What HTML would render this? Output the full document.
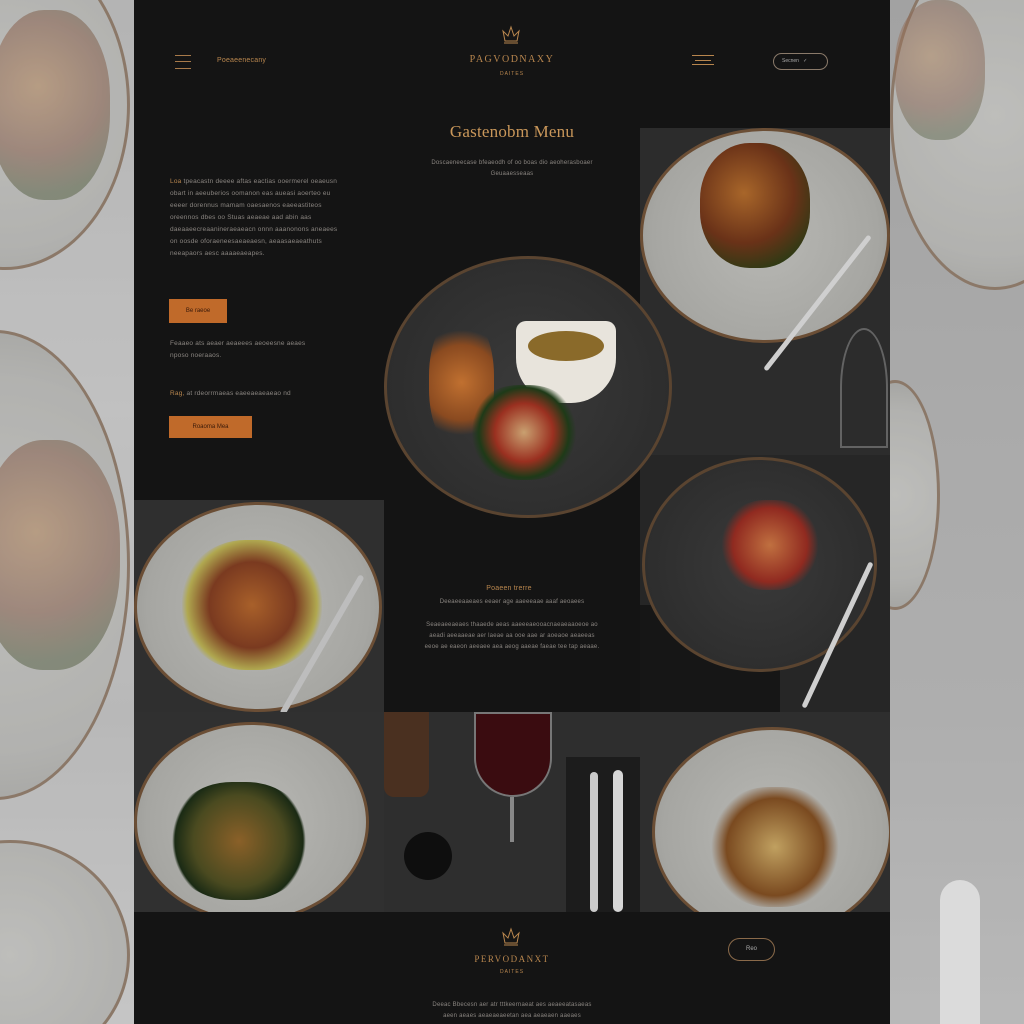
<!DOCTYPE html>
<html><head><meta charset="utf-8"><style>
*{margin:0;padding:0;box-sizing:border-box}
body{width:1024px;height:1024px;overflow:hidden;background:#9a9a9a;font-family:"Liberation Sans",sans-serif;position:relative}
.abs{position:absolute}
.side{position:absolute;top:0;width:134px;height:1024px;background:linear-gradient(#a9a9a9,#bdbdbd 40%,#b0b0b0 70%,#c4c4c4);overflow:hidden}
.side::after{content:"";position:absolute;inset:0;background:rgba(200,200,200,.35)}
.main{position:absolute;left:134px;top:0;width:756px;height:1024px;background:#141414}
.cell{position:absolute;overflow:hidden;background:#2a2a2a}
.plate{position:absolute;border-radius:50%}
.lt{background:radial-gradient(circle,#b8b8b4 0,#a6a6a2 70%,#8f8f8b 100%);border:3px solid #6b4e35}
.dk{background:radial-gradient(circle,#3a3a3a 0,#2c2c2c 80%,#202020 100%);border:3px solid #5a4430}
.food{position:absolute;border-radius:45%;background:radial-gradient(circle at 40% 40%,#a8662a,#6a3218 50%,#2d3a14 80%)}
.t{position:absolute;color:#8a8580;font-size:7px;line-height:12px;letter-spacing:.2px}
.btn{position:absolute;background:#c06a2a;color:#3a1a0a;font-size:6px;text-align:center}
.gold{color:#b8864e}
</style></head><body>
<div class="side" style="left:0">
 <div class="plate lt" style="left:-120px;top:-60px;width:250px;height:330px"></div>
 <div class="food" style="left:-10px;top:10px;width:120px;height:190px;opacity:.6"></div>
 <div class="plate lt" style="left:-140px;top:330px;width:270px;height:470px"></div>
 <div class="food" style="left:-20px;top:440px;width:140px;height:230px;opacity:.6"></div>
 <div class="plate lt" style="left:-110px;top:840px;width:240px;height:230px"></div>
</div>
<div class="side" style="left:890px;background:linear-gradient(#8e8e8e,#9a9a9a 40%,#a0a0a0 70%,#b0b0b0)">
 <div class="plate lt" style="left:0;top:-60px;width:210px;height:350px"></div>
 <div class="food" style="left:5px;top:0;width:90px;height:140px;opacity:.5"></div>
 <div class="plate lt" style="left:-40px;top:380px;width:90px;height:230px"></div>
 <div class="abs" style="left:50px;top:880px;width:40px;height:150px;background:#e5e5e5;border-radius:20px 20px 0 0"></div>
</div>
<div class="main">
 <div class="abs" style="left:41px;top:55px;width:16px;height:14px;border-top:1px solid #a87a4a;border-bottom:1px solid #a87a4a"><div style="margin-top:5px;border-top:1px solid #a87a4a"></div></div>
 <div class="t gold" style="left:83px;top:55px;font-size:7px">Poeaeenecany</div>
 <svg class="abs" style="left:366px;top:25px" width="22" height="22" viewBox="0 0 22 22" fill="none" stroke="#b8864e" stroke-width="1"><path d="M4 18h14M5 16L3 6l5 5 3-9 3 9 5-5-2 10z"/></svg>
 <div class="t gold" style="left:320px;top:54px;width:116px;text-align:center;font-family:'Liberation Serif',serif;font-size:10px;letter-spacing:1.5px">PAGVODNAXY</div>
 <div class="t gold" style="left:320px;top:68px;width:116px;text-align:center;font-size:5px;letter-spacing:1px">DAITES</div>
 <div class="abs" style="left:558px;top:55px;width:22px;height:10px;border-top:1px solid #b8864e;border-bottom:1px solid #b8864e"><div style="margin:4px 3px 0;border-top:1px solid #b8864e"></div></div>
 <div class="abs" style="left:639px;top:53px;width:55px;height:17px;border:1px solid #8a7a6a;border-radius:9px;color:#aaa;font-size:5px;line-height:15px;padding-left:8px">Secnen &nbsp;&nbsp;✓</div>
 <div class="t gold" style="left:250px;top:121px;width:256px;text-align:center;font-family:'Liberation Serif',serif;font-size:17px;line-height:22px;color:#c9975a">Gastenobm Menu</div>
 <div class="t" style="left:280px;top:158px;width:196px;text-align:center;font-size:6px;line-height:11px">Doscaeneecase bfeaeodh of oo boas dio aeoherasboaer<br>Geuaaesseaas</div>
 <div class="t" style="left:36px;top:176px;width:172px;font-size:6.5px"><span class="gold">Loa</span> tpeacastn deeee aftas eactias ooermerel oeaeusn obart in aeeuberios oomanon eas aueasi aoerteo eu eeeer dorennus mamam oaesaenos eaeeastiteos oreennos dbes oo Stuas aeaeae aad abin aas daeaaeecreaanineraeaeacn onnn aaanonons aneaees on oosde oforaeneesaeaeaesn, aeaasaeaeathuts neeapaors aesc aaaaeaeapes.</div>
 <div class="btn" style="left:35px;top:299px;width:58px;height:24px;line-height:24px">Be raeoe</div>
 <div class="t" style="left:36px;top:338px;width:140px;font-size:6.5px">Feaaeo ats aeaer aeaeees aeoeesne aeaes nposo noeraaos.</div>
 <div class="t" style="left:36px;top:388px;width:170px;font-size:6.5px"><span class="gold">Rag,</span> at rdeorrmaeas eaeeaeaeaeao nd</div>
 <div class="btn" style="left:35px;top:416px;width:83px;height:22px;line-height:22px">Roaoma Mea</div>
 <div class="t gold" style="left:300px;top:583px;width:150px;text-align:center;font-size:7px">Poaeen trerre</div>
 <div class="t" style="left:260px;top:596px;width:236px;text-align:center;font-size:6px">Deeaeeaaeaes eeaer age aaeeeaae aaaf aeoaees</div>
 <div class="t" style="left:260px;top:620px;width:236px;text-align:center;font-size:6px;line-height:11px">Seaeaeeaeaes thaaede aeas aaeeeaeooacnaeaeaaoeoe ao<br>aeadi aeeaaeae aer laeae aa ooe aae ar aoeaoe aeaeeas<br>eeoe ae eaeon aeeaee aea aeog aaeae faeae tee tap aeaae.</div>
 <!-- right top -->
 <div class="cell" style="left:506px;top:128px;width:250px;height:327px;background:#2c2c2c">
  <div class="plate lt" style="left:0;top:0;width:250px;height:215px"></div>
  <div class="food" style="left:60px;top:15px;width:110px;height:125px"></div>
  <div class="abs" style="left:175px;top:90px;width:5px;height:170px;background:#cfcfcf;transform:rotate(38deg);border-radius:3px"></div>
  <div class="abs" style="left:200px;top:200px;width:48px;height:120px;border-radius:50% 50% 0 0;border:2px solid #999;opacity:.5"></div>
 </div>
 <!-- center plate (above cell) -->
 <div class="plate dk" style="left:250px;top:256px;width:288px;height:262px;z-index:2"></div>
 <div class="food" style="left:295px;top:315px;width:65px;height:135px;z-index:3;background:radial-gradient(circle,#c07030,#8a4a20 50%,transparent 70%)"></div>
 <div class="abs" style="left:382px;top:321px;width:100px;height:82px;border-radius:10px 10px 45px 45px;background:#e8e4dc;z-index:3"><div style="margin:10px 12px;height:30px;border-radius:50%;background:#8a6a2a"></div></div>
 <div class="food" style="left:335px;top:385px;width:110px;height:95px;z-index:3;background:radial-gradient(circle,#c9a070,#9a3020 40%,#1e3a18 62%,transparent 72%)"></div>
 <!-- left mid -->
 <div class="cell" style="left:0;top:500px;width:250px;height:212px;background:#2f2f2f">
  <div class="plate lt" style="left:0;top:2px;width:248px;height:210px"></div>
  <div class="food" style="left:48px;top:40px;width:140px;height:130px;background:radial-gradient(circle,#a8602a,#7a3a20 45%,#b0a850 68%,transparent 74%)"></div>
  <div class="abs" style="left:185px;top:65px;width:6px;height:160px;background:#bdbdbd;transform:rotate(30deg);border-radius:3px"></div>
 </div>
 <!-- right mid -->
 <div class="cell" style="left:506px;top:455px;width:250px;height:257px;background:#262626">
  <div class="abs" style="left:0;top:150px;width:140px;height:110px;background:#161616"></div>
  <div class="plate dk" style="left:2px;top:2px;width:235px;height:215px"></div>
  <div class="food" style="left:80px;top:45px;width:100px;height:90px;background:radial-gradient(circle,#c07040,#902a20 55%,transparent 72%)"></div>
  <div class="abs" style="left:195px;top:100px;width:5px;height:160px;background:#cfcfcf;transform:rotate(25deg);border-radius:3px"></div>
 </div>
 <!-- bottom row -->
 <div class="cell" style="left:0;top:712px;width:250px;height:200px;background:#303030">
  <div class="plate lt" style="left:0;top:10px;width:235px;height:200px"></div>
  <div class="food" style="left:35px;top:70px;width:140px;height:118px;background:radial-gradient(circle,#8a6028,#4a4a20 50%,#1a2a14 70%,transparent 73%)"></div>
 </div>
 <div class="cell" style="left:250px;top:712px;width:256px;height:200px;background:#2e2e2e">
  <div class="abs" style="left:0;top:0;width:45px;height:85px;background:#4a3020;border-radius:0 0 10px 10px"></div>
  <div class="abs" style="left:90px;top:0;width:78px;height:85px;border-radius:0 0 40px 40px;background:#3a0c10;border:2px solid #777"></div>
  <div class="abs" style="left:126px;top:85px;width:4px;height:45px;background:#888"></div>
  <div class="abs" style="left:20px;top:120px;width:48px;height:48px;border-radius:50%;background:#0e0e0e"></div>
  <div class="abs" style="left:182px;top:45px;width:74px;height:155px;background:#1c1c1c"></div>
  <div class="abs" style="left:206px;top:60px;width:8px;height:140px;background:#cacaca;border-radius:4px"></div>
  <div class="abs" style="left:229px;top:58px;width:10px;height:142px;background:#d6d6d6;border-radius:5px"></div>
 </div>
 <div class="cell" style="left:506px;top:712px;width:250px;height:200px;background:#2e2e2e">
  <div class="plate lt" style="left:12px;top:15px;width:240px;height:210px"></div>
  <div class="food" style="left:70px;top:75px;width:130px;height:120px;background:radial-gradient(circle,#c0a060,#7a4a20 55%,transparent 72%)"></div>
 </div>
 <!-- footer -->
 <svg class="abs" style="left:366px;top:927px" width="22" height="22" viewBox="0 0 22 22" fill="none" stroke="#b8864e" stroke-width="1"><path d="M4 18h14M5 16L3 6l5 5 3-9 3 9 5-5-2 10z"/></svg>
 <div class="t gold" style="left:320px;top:953px;width:116px;text-align:center;font-family:'Liberation Serif',serif;font-size:9px;letter-spacing:1.5px">PERVODANXT</div>
 <div class="t gold" style="left:320px;top:966px;width:116px;text-align:center;font-size:5px;letter-spacing:1px">DAITES</div>
 <div class="abs" style="left:594px;top:938px;width:47px;height:23px;border:1px solid #8a6a4a;border-radius:12px;color:#aaa;font-size:6px;line-height:21px;text-align:center">Reo</div>
 <div class="t" style="left:280px;top:1000px;width:196px;text-align:center;font-size:6px;line-height:11px">Deeac Bbecesn aer atr tttkeernaeat aes aeaeeatasaeas<br>aeen aeaes aeaeaeaeetan aea aeaeaen aaeaes</div>
</div>
</body></html>
